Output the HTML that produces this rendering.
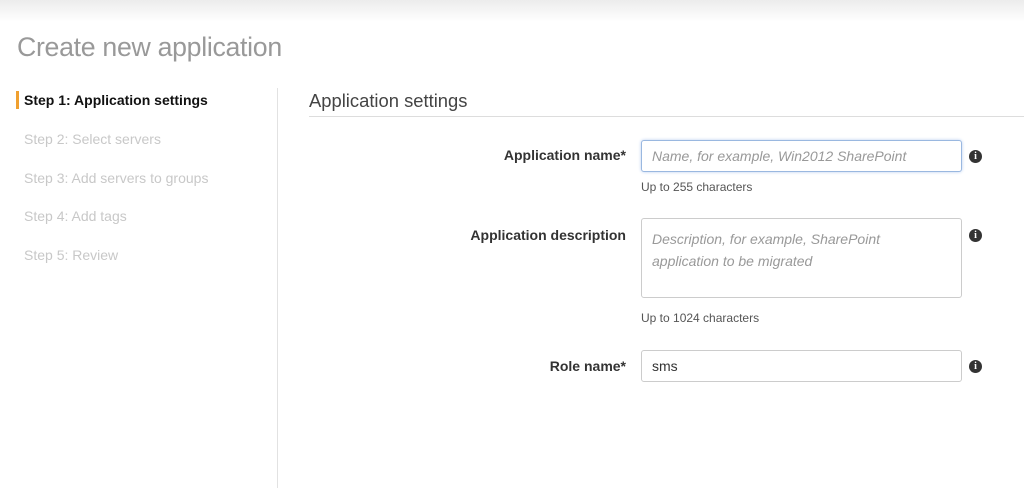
<!DOCTYPE html>
<html><head><style>
body{margin:0;width:1024px;height:482px;background:#fff;font-family:"Liberation Sans",sans-serif;position:relative;overflow:hidden}
.top{position:absolute;left:0;top:0;width:1024px;height:22px;background:linear-gradient(#ececec,#fff)}
.a{position:absolute;white-space:nowrap}
.title{left:17px;top:32px;font-size:26.7px;color:#999;font-weight:300;letter-spacing:-0.3px}
.step{left:24px;font-size:14px;color:#c8c8c8}
.lbl{font-size:14px;font-weight:bold;color:#333;text-align:right;width:300px;left:326px}
.box{position:absolute;left:641px;width:319px;border:1px solid #ccc;border-radius:3px;background:#fff}
.ph{font-style:italic;color:#999;font-size:14px}
.help{left:641px;font-size:12px;color:#555}
.info{position:absolute;left:969px;width:13px;height:13px;border-radius:50%;background:#333;color:#fff;font:bold 10px "Liberation Serif",serif;text-align:center;line-height:13px}
</style></head><body>
<div class="top"></div>
<div class="a title">Create new application</div>
<div style="position:absolute;left:16px;top:91px;width:3px;height:18px;background:#f0a030"></div>
<div class="a step" style="top:92px;color:#111;font-weight:bold">Step 1: Application settings</div>
<div class="a step" style="top:131px">Step 2: Select servers</div>
<div class="a step" style="top:170px">Step 3: Add servers to groups</div>
<div class="a step" style="top:208px">Step 4: Add tags</div>
<div class="a step" style="top:247px">Step 5: Review</div>
<div style="position:absolute;left:277px;top:88px;width:1px;height:400px;background:#e2e2e2"></div>
<div class="a" style="left:309px;top:90px;font-size:18.4px;color:#444">Application settings</div>
<div style="position:absolute;left:309px;top:116px;width:715px;height:1px;background:#ddd"></div>

<div class="a lbl" style="top:147px">Application name*</div>
<div class="box" style="top:140px;height:30px;border-color:#9ab8e0;box-shadow:0 0 3px #b8cdf0"><span class="a ph" style="left:10px;top:7px">Name, for example, Win2012 SharePoint</span></div>
<div class="info" style="top:150px">i</div>
<div class="a help" style="top:180px">Up to 255 characters</div>

<div class="a lbl" style="top:227px">Application description</div>
<div class="box" style="top:218px;height:78px"><span class="a ph" style="left:10px;top:9px;line-height:22px">Description, for example, SharePoint<br>application to be migrated</span></div>
<div class="info" style="top:229px">i</div>
<div class="a help" style="top:311px">Up to 1024 characters</div>

<div class="a lbl" style="top:358px">Role name*</div>
<div class="box" style="top:350px;height:30px"><span class="a" style="left:10px;top:7px;font-size:14px;color:#333">sms</span></div>
<div class="info" style="top:360px">i</div>
</body></html>
